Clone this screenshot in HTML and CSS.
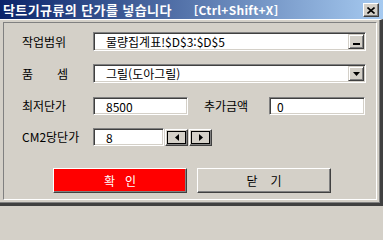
FILE: index.html
```html
<!DOCTYPE html>
<html lang="ko">
<head>
<meta charset="utf-8">
<title>닥트기규류의 단가를 넣습니다</title>
<link rel="stylesheet" href="styles.css">
</head>
<body>
<div class="window">
  <div class="titlebar">
    <span class="title">닥트기규류의 단가를 넣습니다</span>
    <span class="shortcut">[Ctrl+Shift+X]</span>
    <span class="close"><svg width="8" height="7" viewBox="0 0 8 7"><path d="M0.5 0.5 L7.5 6.5 M7.5 0.5 L0.5 6.5" stroke="#000" stroke-width="1.6" fill="none"/></svg></span>
  </div>
  <div class="frame">
    <div class="panel">
      <div class="row row-1">
        <span class="label">작업범위</span>
        <div class="field field-wide">
          <span class="value">물량집계표!$D$3:$D$5</span>
          <span class="dd-btn"><svg width="7" height="2" viewBox="0 0 7 2"><rect x="0" y="0" width="7" height="2" fill="#000"/></svg></span>
        </div>
      </div>
      <div class="row row-2">
        <span class="label label-spread"><span>품</span><span>셈</span></span>
        <div class="field field-wide">
          <span class="value">그릴(도아그릴)</span>
          <span class="dd-btn dd-down"><svg width="7" height="4" viewBox="0 0 7 4"><polygon points="0,0 7,0 3.5,4" fill="#000"/></svg></span>
        </div>
      </div>
      <div class="row row-3">
        <span class="label">최저단가</span>
        <div class="field field-price"><span class="value">8500</span></div>
        <span class="label label-extra">추가금액</span>
        <div class="field field-extra"><span class="value">0</span></div>
      </div>
      <div class="row row-4">
        <span class="label">CM2당단가</span>
        <div class="field field-unit"><span class="value">8</span></div>
        <span class="spin"><span class="spin-inner"><svg width="4" height="7" viewBox="0 0 4 7"><polygon points="4,0 4,7 0,3.5" fill="#000"/></svg></span></span>
        <span class="spin"><span class="spin-inner"><svg width="4" height="7" viewBox="0 0 4 7"><polygon points="0,0 0,7 4,3.5" fill="#000"/></svg></span></span>
      </div>
      <div class="row row-buttons">
        <span class="btn btn-ok"><span>확</span><span>인</span></span>
        <span class="btn btn-close"><span>닫</span><span>기</span></span>
      </div>
    </div>
  </div>
</div>
</body>
</html>
```
FILE: styles.css
```css
* { box-sizing: border-box; }

html, body {
  margin: 0;
  background: #d4d0c8;
}

body {
  font-family: "Noto Sans CJK KR", "Noto Sans", sans-serif;
  font-size: 12px;
  color: #000;
}

.window {
  width: 383px;
  height: 206px;
  display: flex;
  flex-direction: column;
  overflow: hidden;
}

.titlebar {
  height: 19px;
  flex: none;
  display: flex;
  align-items: center;
  padding-left: 3px;
  padding-right: 4px;
  background: linear-gradient(to right, #0a246a, #a6caf0);
  color: #fff;
  font-weight: bold;
  white-space: nowrap;
}

.title {
  font-size: 13px;
  letter-spacing: 0.4px;
  line-height: 19px;
}

.shortcut {
  margin-left: 22px;
  font-size: 12px;
  letter-spacing: 0.3px;
  line-height: 19px;
}

.close {
  margin-left: auto;
  align-self: flex-start;
  margin-top: 3px;
  width: 16px;
  height: 14px;
  display: flex;
  align-items: center;
  justify-content: center;
  background: #d4d0c8;
  border: 1px solid;
  border-color: #fff #404040 #404040 #fff;
  box-shadow: inset -1px -1px 0 #808080;
}

.frame {
  flex: 1;
  display: flex;
  border-top: 1px solid #fff;
  padding: 2px 3px 3px 3px;
  border-right: 3px solid #404040;
  border-bottom: 3px solid #404040;
  box-shadow: inset -1px -1px 0 #808080;
}

.panel {
  flex: 1;
  display: flex;
  flex-direction: column;
  border: 1px solid;
  border-color: #808080 #fff #fff #808080;
  padding: 9px 10px 0 18px;
}

.row {
  display: flex;
  align-items: center;
  height: 19px;
  flex: none;
}

.row-2 { margin-top: 13px; }
.row-3 { margin-top: 14px; height: 18px; }
.row-4 { margin-top: 13px; height: 18px; }
.row-buttons { margin-top: 22px; height: 25px; padding-left: 31px; gap: 10px; }

.label {
  width: 71px;
  flex: none;
  white-space: nowrap;
  line-height: 16px;
}

.label-spread {
  display: flex;
  gap: 24px;
}

.label-extra {
  width: 65px;
  margin-left: 16px;
}

.field {
  height: 100%;
  flex: none;
  display: flex;
  align-items: center;
  background: #fff;
  border: 1px solid;
  border-color: #808080 #fff #fff #808080;
  box-shadow: inset 1px 1px 0 #404040, inset -1px -1px 0 #d4d0c8;
  padding-left: 12px;
  white-space: nowrap;
}

.value { line-height: 15px; }

.field-wide { width: 273px; }
.field-price { width: 95px; }
.field-extra { width: 96px; padding-left: 7px; }
.field-unit { width: 71px; }

.dd-btn {
  margin-left: auto;
  margin-right: 1px;
  width: 16px;
  height: 15px;
  display: flex;
  align-items: flex-end;
  justify-content: center;
  padding-bottom: 3px;
  background: #d4d0c8;
  border: 1px solid;
  border-color: #d4d0c8 #404040 #404040 #d4d0c8;
  box-shadow: inset 1px 1px 0 #fff, inset -1px -1px 0 #808080;
}

.dd-down {
  align-items: center;
  padding-bottom: 0;
}

.spin {
  margin-left: 1px;
  width: 23px;
  height: 17px;
  flex: none;
  display: flex;
  padding: 1px;
  background: #d4d0c8;
  border: 1px solid;
  border-color: #fff #404040 #404040 #fff;
  box-shadow: inset -1px -1px 0 #808080;
}

.spin-inner {
  flex: 1;
  display: flex;
  align-items: center;
  justify-content: center;
  border: 1px solid #000;
}

.btn {
  width: 134px;
  height: 25px;
  flex: none;
  display: flex;
  align-items: center;
  justify-content: center;
  border: 1px solid;
  border-color: #fff #404040 #404040 #fff;
  box-shadow: inset -1px -1px 0 #808080;
  background: #d4d0c8;
  font-size: 12px;
}

.btn-ok {
  background: #ff0000;
  color: #fff;
  gap: 10px;
}

.btn-close {
  gap: 13px;
}
```
